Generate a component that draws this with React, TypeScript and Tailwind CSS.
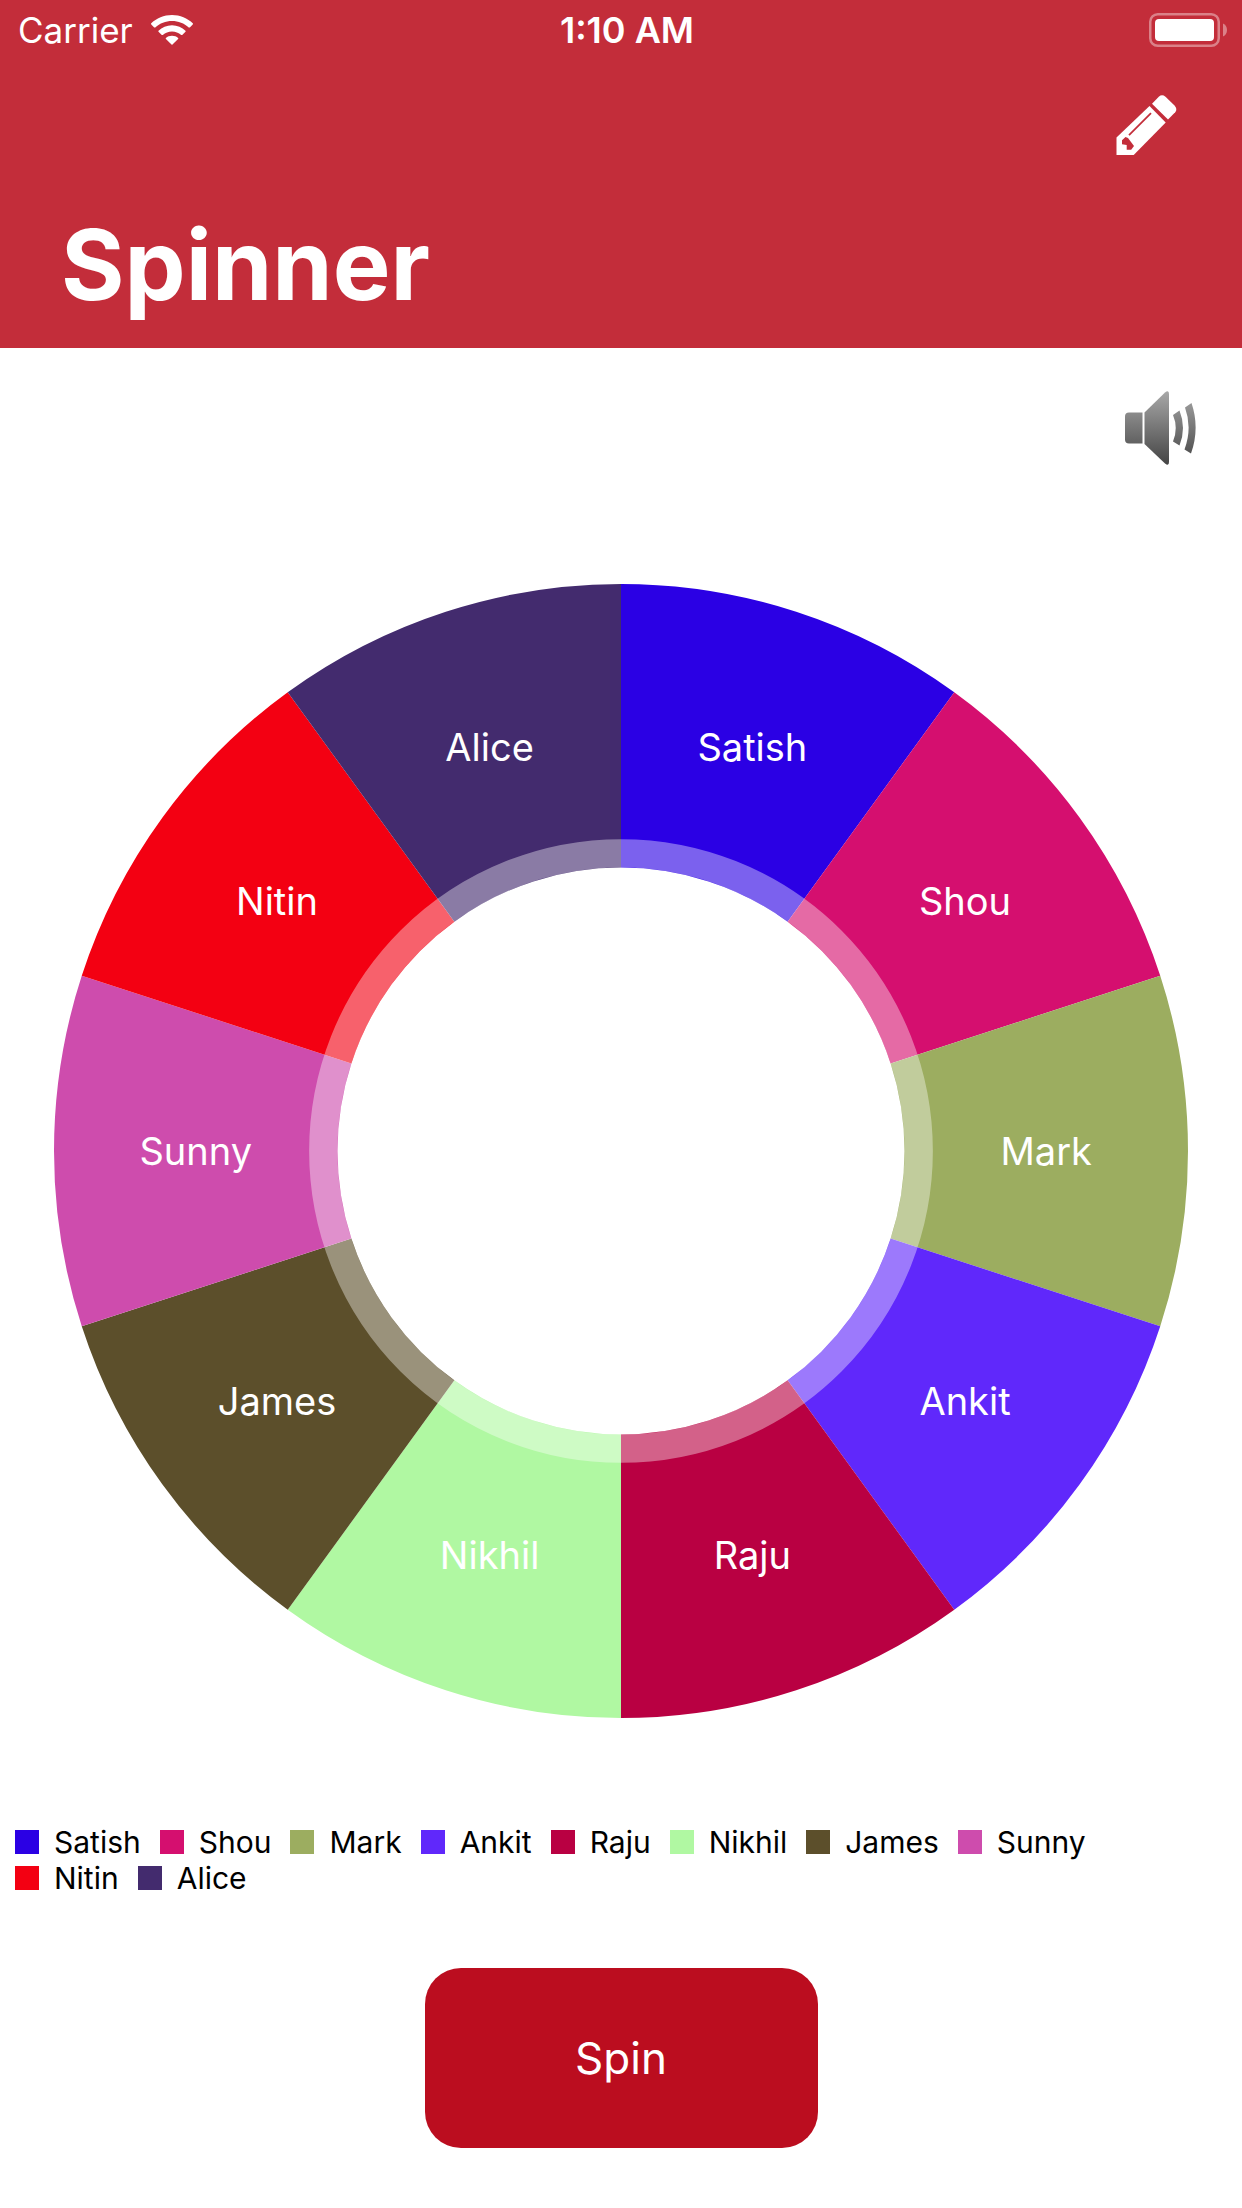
type Entry = { name: string; color: string };

const ENTRIES: Entry[] = [
  { name: "Satish", color: "#2b00e4" },
  { name: "Shou", color: "#d50f6f" },
  { name: "Mark", color: "#9cad60" },
  { name: "Ankit", color: "#6028fb" },
  { name: "Raju", color: "#b90042" },
  { name: "Nikhil", color: "#b0f8a2" },
  { name: "James", color: "#5c4f2b" },
  { name: "Sunny", color: "#ce4cad" },
  { name: "Nitin", color: "#f30012" },
  { name: "Alice", color: "#432b6e" },
];

const SIZE = 1134;
const C = SIZE / 2;
const R_OUTER = C;
const R_HOLE = C * 0.5;
const R_RING = C * 0.55;
const R_LABEL = C * 0.75;

function point(r: number, turn: number): [number, number] {
  const a = turn * Math.PI * 2;
  return [C + r * Math.sin(a), C - r * Math.cos(a)];
}

function slicePath(i: number, n: number) {
  const [x0, y0] = point(R_OUTER, i / n);
  const [x1, y1] = point(R_OUTER, (i + 1) / n);
  const [x2, y2] = point(R_HOLE, (i + 1) / n);
  const [x3, y3] = point(R_HOLE, i / n);
  return `M${x0} ${y0}A${R_OUTER} ${R_OUTER} 0 0 1 ${x1} ${y1}L${x2} ${y2}A${R_HOLE} ${R_HOLE} 0 0 0 ${x3} ${y3}Z`;
}

function Wheel() {
  const n = ENTRIES.length;
  return (
    <svg viewBox={`0 0 ${SIZE} ${SIZE}`} className="block h-auto w-full" role="img" aria-label="Spinner wheel">
      {ENTRIES.map((e, i) => (
        <path key={e.name} d={slicePath(i, n)} fill={e.color} />
      ))}
      <circle cx={C} cy={C} r={(R_HOLE + R_RING) / 2} fill="none" stroke="#fff" strokeOpacity={0.38} strokeWidth={R_RING - R_HOLE} />
      {ENTRIES.map((e, i) => {
        const [x, y] = point(R_LABEL, (i + 0.5) / n);
        return (
          <text key={e.name} x={x} y={y + 14} textAnchor="middle" fill="#fff" className="text-[38px]">
            {e.name}
          </text>
        );
      })}
    </svg>
  );
}

function WifiIcon() {
  return (
    <svg viewBox="0 0 42 30" className="h-[30px] w-[42px]" fill="#fff" aria-hidden="true">
      <path d="M21 0C29 0 36.500 3.200 42 8.500Q42 9.300 41.500 9.800L38.800 12.400Q38.300 12.800 37.700 12.400C33.200 8.400 27.400 6.100 21 6.100S8.800 8.400 4.300 12.400Q3.700 12.800 3.200 12.400L.5 9.800Q0 9.300 0 8.500C5.500 3.200 13 0 21 0Z" />
      <path d="M21 10.300C26.300 10.300 31 12.400 34.500 15.700Q34.900 16.200 34.500 16.700L31.200 19.900Q30.700 20.300 30.200 19.900C27.700 17.700 24.500 16.400 21 16.400S14.300 17.700 11.800 19.900Q11.300 20.300 10.800 19.900L7.500 16.700Q7.100 16.200 7.500 15.700C11 12.400 15.700 10.300 21 10.300Z" />
      <path d="M21 20.700C23.600 20.700 25.600 21.600 27.100 23Q27.500 23.500 27.100 24L21.500 29.600Q21 30 20.500 29.600L14.900 24Q14.500 23.500 14.900 23C16.400 21.600 18.400 20.700 21 20.700Z" />
    </svg>
  );
}

function BatteryIcon() {
  return (
    <svg viewBox="0 0 78 34" className="h-[34px] w-[78px]" aria-label="Battery full" role="img">
      <rect x="1.250" y="1.250" width="68.500" height="31.500" rx="7.500" fill="none" stroke="#fff" strokeOpacity="0.4" strokeWidth="2.500" />
      <rect x="6" y="6" width="59" height="22" rx="4" fill="#fff" />
      <path d="M74 10.500C76.500 11.500 78 14 78 17S76.500 22.500 74 23.500Z" fill="#fff" fillOpacity="0.4" />
    </svg>
  );
}

function PencilIcon() {
  return (
    <svg viewBox="0 0 60 60" className="h-[60px] w-[60px] overflow-visible" aria-hidden="true">
      <path d="M36 8.700L42.800 1.700Q46-1.200 49.500 1.700L58.500 10.500Q61.800 14 59.200 17.300L52 24.500Z" fill="#fff" />
      <path d="M33.500 11L49.700 27.500L17.700 60H.5V42.500Z" fill="#fff" />
      <path d="M13 40.200L35 18.200" stroke="#c32d3a" strokeWidth="1.800" />
      <path d="M9.500 42L12 43L18 51L15.200 54.700H10.700V50L6 49.200V45.300Z" fill="#c32d3a" />
    </svg>
  );
}

function SpeakerIcon() {
  return (
    <svg viewBox="0 0 72 74" className="h-[74px] w-[72px]" aria-hidden="true">
      <defs>
        <linearGradient id="speaker-tone" gradientUnits="userSpaceOnUse" x1="0" y1="0" x2="0" y2="74">
          <stop offset="0" stopColor="#a8a8a8" />
          <stop offset="1" stopColor="#444" />
        </linearGradient>
      </defs>
      <g fill="url(#speaker-tone)">
        <path d="M4 21.500H17.500V52.500H4Q0 52.500 0 48.500V25.500Q0 21.500 4 21.500Z" />
        <path d="M19.500 21.500L40 1.500Q44 -1.500 44 3V71Q44 75.500 40 72.500L19.500 53Z" />
        <path d="M48 24L54.500 19.500Q61.500 37 54.500 54.500L48 50.500Q53.500 37 48 24Z" />
        <path d="M60 16.500L66.500 12Q75 37 66 62.500L59.500 58.500Q67.500 37 60 16.500Z" />
      </g>
    </svg>
  );
}

export default function App() {
  return (
    <div className="flex min-h-screen flex-col bg-white font-['Inter','Liberation_Sans',sans-serif]">
      <header className="bg-[#c32d3a] text-white">
        <div className="grid h-[60px] grid-cols-3 items-center px-[15px] leading-[60px]">
          <div className="flex items-center gap-[18px] pl-[3px] text-[35px]">
            <span>Carrier</span>
            <WifiIcon />
          </div>
          <time className="pl-3 text-center text-[36px] font-semibold">1:10 AM</time>
          <div className="flex justify-end">
            <BatteryIcon />
          </div>
        </div>
        <div className="flex justify-end px-[66px] pt-[35px]">
          <button type="button" aria-label="Edit names" className="block">
            <PencilIcon />
          </button>
        </div>
        <h1 className="px-[61px] pt-[50px] pb-[23px] text-[97px] leading-[120px] font-bold">Spinner</h1>
      </header>
      <main className="flex flex-1 flex-col">
        <div className="flex justify-end px-[45px] pt-[43px]">
          <button type="button" aria-label="Toggle sound" className="block">
            <SpeakerIcon />
          </button>
        </div>
        <div className="px-[54px] pt-[119px]">
          <Wheel />
        </div>
        <ul className="flex flex-wrap gap-x-[19px] pt-[106px] pr-[100px] pl-[15px] text-[30px] leading-9 text-black">
          {ENTRIES.map((e) => (
            <li key={e.name} className="flex items-center gap-[15px]">
              <span className="size-6" style={{ backgroundColor: e.color }} />
              {e.name}
            </li>
          ))}
        </ul>
        <div className="flex justify-center pt-[72px] pb-[60px]">
          <button type="button" className="h-[180px] w-[393px] rounded-[36px] bg-[#bb0d1f] text-[44px] text-white">
            Spin
          </button>
        </div>
      </main>
    </div>
  );
}
